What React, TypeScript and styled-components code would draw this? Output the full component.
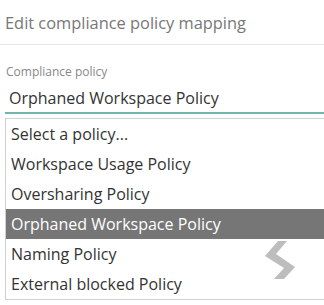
import React from "react";
import styled, { createGlobalStyle } from "styled-components";

const Global = createGlobalStyle`
  html, body { margin: 0; padding: 0; background: #fff; }
  body { font-family: "Open Sans", "DejaVu Sans", sans-serif; overflow: hidden; }
`;

const Page = styled.div`
  width: 324px;
  height: 305px;
  position: relative;
  overflow: hidden;
`;

const Header = styled.div`
  height: 45px;
  display: flex;
  align-items: center;
  padding: 0 5px 0;
  box-sizing: border-box;
  font-size: 16.4px;
  color: #777;
  border-bottom: 1px solid #e6e6e6;
`;

const Field = styled.div`
  padding: 19px 0 0 5px;
`;

const Label = styled.div`
  font-size: 12px;
  color: #888;
  line-height: 16px;
  padding-left: 1px;
`;

const Value = styled.div`
  font-size: 16px;
  color: #333;
  line-height: 22px;
  padding: 7px 0 3px 4px;
  border-bottom: 2px solid #72b5aa;
`;

const List = styled.ul`
  list-style: none;
  margin: 4px 0 0 0;
  padding: 0;
  border: 1px solid #d0d0d0;
  border-right: none;
`;

const Option = styled.li<{ $selected?: boolean }>`
  height: 30px;
  display: flex;
  align-items: center;
  padding-left: 5px;
  font-size: 16px;
  color: ${(p) => (p.$selected ? "#fff" : "#333")};
  background: ${(p) => (p.$selected ? "#767676" : "transparent")};
`;

const Arrow = styled.svg`
  position: absolute;
  left: 262px;
  top: 240px;
`;

const options = [
  "Select a policy...",
  "Workspace Usage Policy",
  "Oversharing Policy",
  "Orphaned Workspace Policy",
  "Naming Policy",
  "External blocked Policy",
];

export default function App() {
  return (
    <Page>
      <Global />
      <Header>Edit compliance policy mapping</Header>
      <Field>
        <Label>Compliance policy</Label>
        <Value>Orphaned Workspace Policy</Value>
        <List>
          {options.map((o, i) => (
            <Option key={o} $selected={i === 3}>
              {o}
            </Option>
          ))}
        </List>
      </Field>
      <Arrow width="36" height="42" viewBox="262 240 36 42">
        <polygon
          points="278,241 287,241 276,254 295,267 284,279 274,279 284,268 265,256"
          fill="#bdbdbd"
        />
      </Arrow>
    </Page>
  );
}
